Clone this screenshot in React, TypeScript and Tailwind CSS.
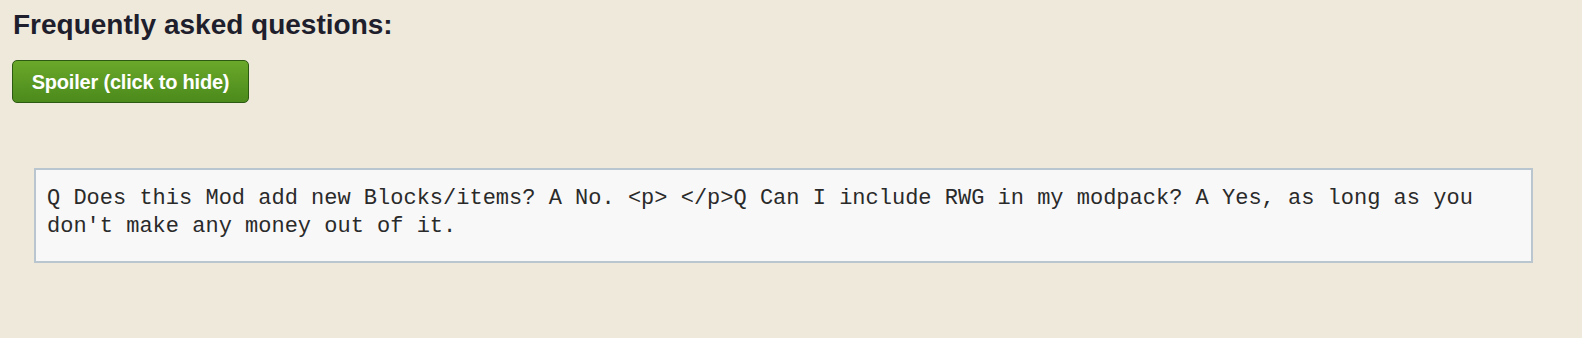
export default function App() {
  return (
    <div className="min-h-[338px] w-full bg-[#efe9dc] pl-[12px] pt-[8px] pb-[40px] font-['Liberation_Sans',Arial,sans-serif]">
      <h2 className="ml-[1px] text-[28px] font-bold leading-[34px] text-[#1e1e2c]">Frequently asked questions:</h2>

      <button
        type="button"
        className="mt-[18px] h-[43px] w-[237px] rounded-[5px] border border-[#2d5a12] bg-gradient-to-b from-[#6aa82a] to-[#4b8a1c] text-[20px] font-bold tracking-[-0.2px] text-white"
      >
        Spoiler (click to hide)
      </button>

      <div className="ml-[22px] mr-[49px] mt-[65px] border-2 border-[#b9c6cf] bg-[#f8f8f8] pl-[11px] pr-[12px] pt-[15px] pb-[20px]">
        <p className="font-['Liberation_Mono','Courier_New',monospace] text-[22px] leading-[28px] text-[#2a2a2a]">
          Q Does this Mod add new Blocks/items? A No. &lt;p&gt; &lt;/p&gt;Q Can I include RWG in my modpack? A Yes, as long as you don't make any money out of it.
        </p>
      </div>
    </div>
  );
}
